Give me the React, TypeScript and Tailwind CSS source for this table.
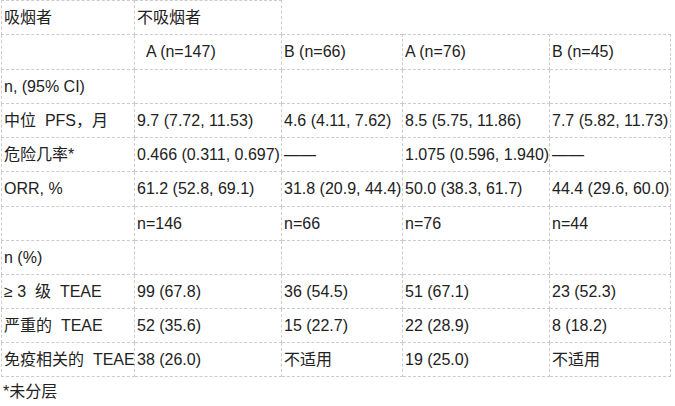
const cell = 'border border-dashed border-[#cccccc] px-[2px] py-0 text-left align-middle whitespace-nowrap overflow-visible';

type Row = { cells: string[]; h?: string };

const rows: Row[] = [
  { cells: ['', '\u00a0\u00a0A (n=147)', 'B (n=66)', 'A (n=76)', 'B (n=45)'], h: 'h-[35px]' },
  { cells: ['n, (95% CI)', '', '', '', ''] },
  { cells: ['中位  PFS，月', '9.7 (7.72, 11.53)', '4.6 (4.11, 7.62)', '8.5 (5.75, 11.86)', '7.7 (5.82, 11.73)'] },
  { cells: ['危险几率*', '0.466 (0.311, 0.697)', '——', '1.075 (0.596, 1.940)', '——'] },
  { cells: ['ORR, %', '61.2 (52.8, 69.1)', '31.8 (20.9, 44.4)', '50.0 (38.3, 61.7)', '44.4 (29.6, 60.0)'], h: 'h-[35px]' },
  { cells: ['', 'n=146', 'n=66', 'n=76', 'n=44'] },
  { cells: ['n (%)', '', '', '', ''] },
  { cells: ['≥ 3  级  TEAE', '99 (67.8)', '36 (54.5)', '51 (67.1)', '23 (52.3)'] },
  { cells: ['严重的  TEAE', '52 (35.6)', '15 (22.7)', '22 (28.9)', '8 (18.2)'] },
  { cells: ['免疫相关的  TEAE', '38 (26.0)', '不适用', '19 (25.0)', '不适用'] },
];

export default function App() {
  return (
    <div className="w-[675px] h-[406px] bg-white text-[#222222] text-[16px] leading-6 font-['Liberation_Sans','Noto_Sans_CJK_SC',sans-serif] overflow-hidden">
      <table className="ml-px table-fixed border-collapse w-[669px]">
        <colgroup>
          <col className="w-[133px]" />
          <col className="w-[147px]" />
          <col className="w-[121px]" />
          <col className="w-[147px]" />
          <col className="w-[121px]" />
        </colgroup>
        <tbody>
          <tr className="h-[34px]">
            <td className={cell}>吸烟者</td>
            <td className={cell}>不吸烟者</td>
          </tr>
          {rows.map((r, i) => (
            <tr key={i} className={r.h ?? 'h-[34px]'}>
              {r.cells.map((c, j) => (
                <td key={j} className={cell + ' whitespace-pre'}>
                  {c}
                </td>
              ))}
            </tr>
          ))}
        </tbody>
      </table>
      <p className="mt-[3px] pl-[3px]">*未分层</p>
    </div>
  );
}
